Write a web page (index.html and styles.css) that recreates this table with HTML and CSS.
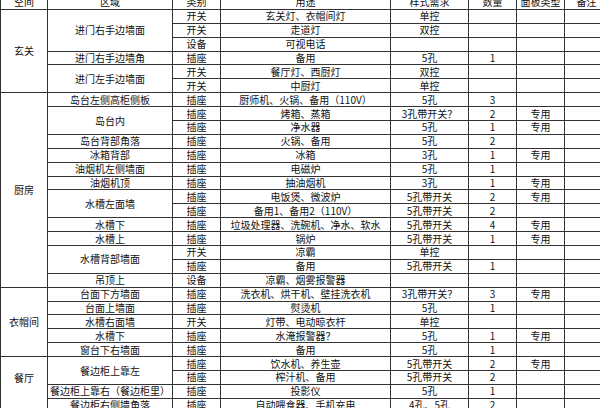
FILE: index.html
```html
<!DOCTYPE html>
<html lang="zh">
<head>
<meta charset="utf-8">
<link rel="stylesheet" href="styles.css">
</head>
<body>
<table class="sheet">
<colgroup>
<col class="c-space"><col class="c-area"><col class="c-type"><col class="c-use"><col class="c-style"><col class="c-num"><col class="c-panel"><col class="c-note">
</colgroup>
<thead>
<tr><th>空间</th><th>区域</th><th>类别</th><th>用途</th><th>样式需求</th><th>数量</th><th>面板类型</th><th>备注</th></tr>
</thead>
<tbody>
<tr><td rowspan="6">玄关</td><td rowspan="3">进门右手边墙面</td><td>开关</td><td>玄关灯、衣帽间灯</td><td>单控</td><td></td><td></td><td></td></tr>
<tr><td>开关</td><td>走道灯</td><td>双控</td><td></td><td></td><td></td></tr>
<tr><td>设备</td><td>可视电话</td><td></td><td></td><td></td><td></td></tr>
<tr><td>进门右手边墙角</td><td>插座</td><td>备用</td><td>5孔</td><td>1</td><td></td><td></td></tr>
<tr><td rowspan="2">进门左手边墙面</td><td>开关</td><td>餐厅灯、西厨灯</td><td>双控</td><td></td><td></td><td></td></tr>
<tr><td>开关</td><td>中厨灯</td><td>单控</td><td></td><td></td><td></td></tr>
<tr><td rowspan="14">厨房</td><td>岛台左侧高柜侧板</td><td>插座</td><td>厨师机、火锅、备用（110V）</td><td>5孔</td><td>3</td><td></td><td></td></tr>
<tr><td rowspan="2">岛台内</td><td>插座</td><td>烤箱、蒸箱</td><td>3孔带开关<span class="q">？</span></td><td>2</td><td>专用</td><td></td></tr>
<tr><td>插座</td><td>净水器</td><td>5孔</td><td>1</td><td>专用</td><td></td></tr>
<tr><td>岛台背部角落</td><td>插座</td><td>火锅、备用</td><td>5孔</td><td>2</td><td></td><td></td></tr>
<tr><td>冰箱背部</td><td>插座</td><td>冰箱</td><td>3孔</td><td>1</td><td>专用</td><td></td></tr>
<tr><td>油烟机左侧墙面</td><td>插座</td><td>电磁炉</td><td>5孔</td><td>1</td><td></td><td></td></tr>
<tr><td>油烟机顶</td><td>插座</td><td>抽油烟机</td><td>3孔</td><td>1</td><td>专用</td><td></td></tr>
<tr><td rowspan="2">水槽左面墙</td><td>插座</td><td>电饭煲、微波炉</td><td>5孔带开关</td><td>2</td><td>专用</td><td></td></tr>
<tr><td>插座</td><td>备用1、备用2（110V）</td><td>5孔带开关</td><td>2</td><td></td><td></td></tr>
<tr><td>水槽下</td><td>插座</td><td>垃圾处理器、洗碗机、净水、软水</td><td>5孔带开关</td><td>4</td><td>专用</td><td></td></tr>
<tr><td>水槽上</td><td>插座</td><td>锅炉</td><td>5孔带开关</td><td>1</td><td>专用</td><td></td></tr>
<tr><td rowspan="2">水槽背部墙面</td><td>开关</td><td>凉霸</td><td>单控</td><td></td><td></td><td></td></tr>
<tr><td>插座</td><td>备用</td><td>5孔带开关</td><td>1</td><td></td><td></td></tr>
<tr><td>吊顶上</td><td>设备</td><td>凉霸、烟雾报警器</td><td></td><td></td><td></td><td></td></tr>
<tr><td rowspan="5">衣帽间</td><td>台面下方墙面</td><td>插座</td><td>洗衣机、烘干机、壁挂洗衣机</td><td>3孔带开关<span class="q">？</span></td><td>3</td><td>专用</td><td></td></tr>
<tr><td>台面上墙面</td><td>插座</td><td>熨烫机</td><td>5孔</td><td>1</td><td></td><td></td></tr>
<tr><td>水槽右面墙</td><td>开关</td><td>灯带、电动晾衣杆</td><td>单控</td><td></td><td></td><td></td></tr>
<tr><td>水槽下</td><td>插座</td><td>水淹报警器<span class="q">？</span></td><td>5孔</td><td>1</td><td>专用</td><td></td></tr>
<tr><td>窗台下右墙面</td><td>插座</td><td>备用</td><td>5孔</td><td>1</td><td></td><td></td></tr>
<tr><td rowspan="4" class="top-label">餐厅</td><td rowspan="2">餐边柜上靠左</td><td>插座</td><td>饮水机、养生壶</td><td>5孔带开关</td><td>2</td><td>专用</td><td></td></tr>
<tr><td>插座</td><td>榨汁机、备用</td><td>5孔带开关</td><td>2</td><td></td><td></td></tr>
<tr><td>餐边柜上靠右（餐边柜里）</td><td>插座</td><td>投影仪</td><td>5孔</td><td>1</td><td></td><td></td></tr>
<tr><td>餐边柜右侧墙角落</td><td>插座</td><td>自动喂食器、手机充电</td><td>4孔、5孔</td><td>2</td><td></td><td></td></tr>
</tbody>
</table>
</body>
</html>
```
FILE: styles.css
```css
html, body {
  margin: 0;
  padding: 0;
  background: #ffffff;
}
body {
  width: 600px;
  height: 408px;
  overflow: hidden;
  font-family: "Noto Sans CJK SC", "Noto Sans", "DejaVu Sans", sans-serif;
  color: #111111;
}
.sheet {
  margin-top: -5px;
  width: 608px;
  table-layout: fixed;
  border-collapse: collapse;
  font-size: 10px;
  line-height: 12px;
}
.c-space { width: 47px; }
.c-area { width: 125px; }
.c-type { width: 48px; }
.c-use { width: 170px; }
.c-style { width: 78px; }
.c-num { width: 48px; }
.c-panel { width: 48px; }
.c-note { width: 44px; }
.sheet tr {
  height: 13.9px;
}
.sheet th, .sheet td {
  border: 1px solid #333333;
  padding: 0;
  text-align: center;
  vertical-align: middle;
  white-space: nowrap;
  overflow: hidden;
  font-weight: normal;
}
.sheet td.top-label {
  vertical-align: top;
  padding-top: 15px;
}
.q {
  font-family: "Noto Sans CJK TC", "Noto Sans CJK SC", sans-serif;
}
```
